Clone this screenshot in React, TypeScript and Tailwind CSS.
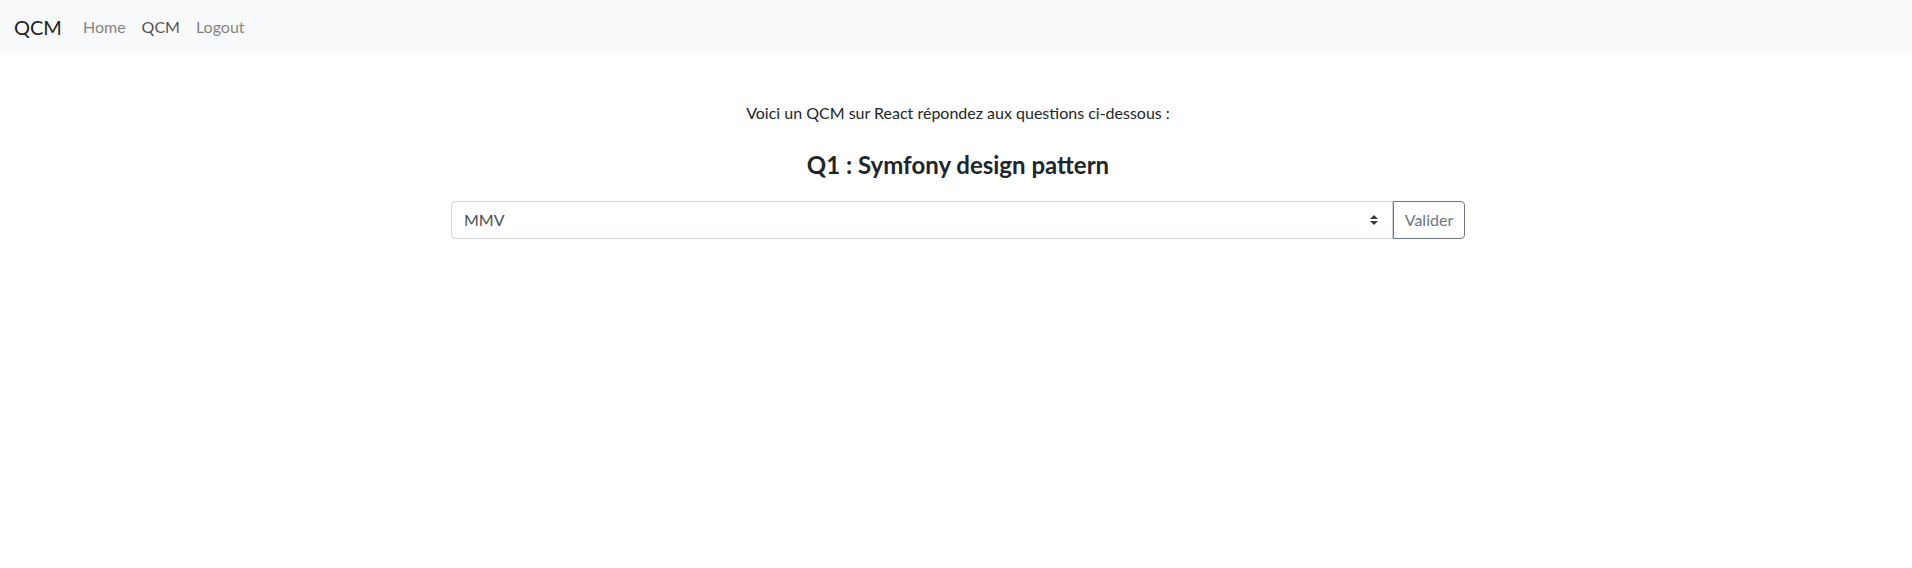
const App = () => {
  return (
    <div className="min-h-[568px] bg-white font-['Lato',sans-serif] text-[#212529]">
      <nav className="flex h-[53px] items-center bg-[#f8f9fa] pl-[14px]">
        <span className="mr-[13px] text-[20px] text-black/90">QCM</span>
        <ul className="flex text-[16px]">
          <li className="px-2 text-black/50">Home</li>
          <li className="px-2 text-black/70">QCM</li>
          <li className="px-2 text-black/50">Logout</li>
        </ul>
      </nav>
      <main className="flex flex-col items-center pl-[4px] pt-[48px]">
        <p className="text-[16px] leading-6">Voici un QCM sur React répondez aux questions ci-dessous :</p>
        <h4 className="mt-[25px] text-[24px] font-bold leading-[29px]">Q1 : Symfony design pattern</h4>
        <form className="mt-[22px] flex w-[1014px]">
          <div className="relative flex-1">
            <select
              defaultValue="MMV"
              className="h-[38px] w-full appearance-none rounded-l-[4px] border border-[#ced4da] bg-white pl-[12px] pr-8 text-[16px] text-[#495057] outline-none"
            >
              <option>MMV</option>
              <option>MVC</option>
              <option>MVP</option>
            </select>
            <svg className="pointer-events-none absolute right-[15px] top-[14px]" width="8" height="10" viewBox="0 0 8 10">
              <path d="M4 0 L8 4 H0 Z M4 10 L0 6 H8 Z" fill="#343a40" />
            </svg>
          </div>
          <button type="button" className="h-[38px] w-[72px] rounded-r-[4px] border border-[#6c757d] text-[16px] text-[#6c757d]">
            Valider
          </button>
        </form>
      </main>
    </div>
  )
}

export default App
